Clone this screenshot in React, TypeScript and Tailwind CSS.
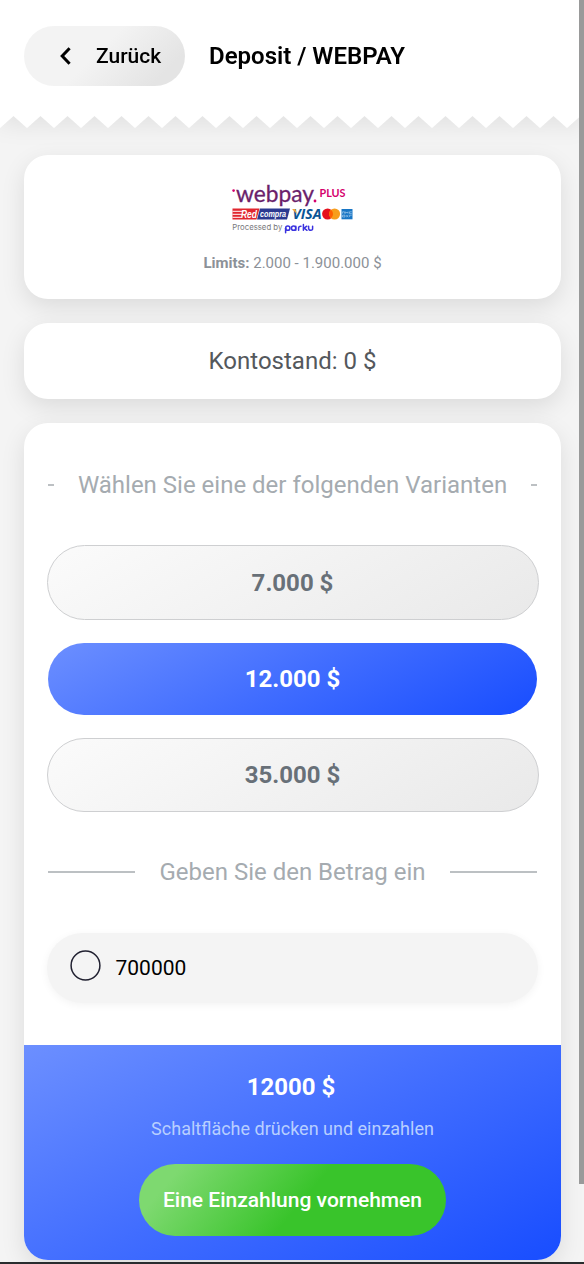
import React from "react";

function ZigZag() {
  const teeth = Array.from({ length: 22 }, (_, i) => `L${i * 27 + 13.5} 0 L${i * 27 + 27} 12`).join(" ");
  return (
    <svg className="block h-[13px] w-full" width="584" height="13" viewBox="0 0 584 13" preserveAspectRatio="xMinYMin slice" aria-hidden="true">
      <path d={`M0 0 L0 12 ${teeth} L594 0 Z`} fill="#fff" />
    </svg>
  );
}

function WebpayLogo() {
  return (
    <svg className="block overflow-visible" width="122" height="50" viewBox="0 0 122 50" role="img">
      <circle cx="1.6" cy="6.6" r="1.3" fill="#d5006c" />
      <text x="4" y="17.8" fontFamily="Lato, sans-serif" fontSize="23" fontWeight="400" fill="#6b1f6b" stroke="#6b1f6b" strokeWidth="0.3" textLength="78" lengthAdjust="spacingAndGlyphs">webpay</text>
      <circle cx="83" cy="17" r="1.4" fill="#d5006c" />
      <text x="87.5" y="13.4" fontFamily="Lato, sans-serif" fontSize="11" fontWeight="700" fill="#d5006c" textLength="26" lengthAdjust="spacingAndGlyphs">PLUS</text>

      <path d="M0.5 24.5H27.5L24.5 35.5H0.5Z" fill="#e1262f" />
      <path d="M28 24.5H58L55 35.5H25Z" fill="#2b3990" />
      <path d="M0.5 27.3H11.5M0.5 30.3H10.5M0.5 33.3H9.5" stroke="#fff" strokeWidth="1" />
      <text x="9" y="34" fontFamily="Liberation Sans, sans-serif" fontSize="10.5" fontStyle="italic" fontWeight="700" fill="#fff" textLength="16" lengthAdjust="spacingAndGlyphs">Red</text>
      <text x="28" y="33" fontFamily="Liberation Sans, sans-serif" fontSize="9.5" fontStyle="italic" fontWeight="700" fill="#fff" textLength="26" lengthAdjust="spacingAndGlyphs">compra</text>
      <text x="60.5" y="35" fontFamily="Open Sans, sans-serif" fontSize="14" fontStyle="italic" fontWeight="700" fill="#0a5596" textLength="29" lengthAdjust="spacingAndGlyphs">VISA</text>
      <path d="M60 25H63.4L65 30Z" fill="#f2a63b" />
      <circle cx="95.6" cy="30" r="5.5" fill="#e5101d" />
      <circle cx="102.6" cy="30" r="5.5" fill="#f79e1b" />
      <path d="M99.1 25.8A5.5 5.5 0 0 1 99.1 34.2A5.5 5.5 0 0 1 99.1 25.8Z" fill="#ff5f00" />
      <rect x="109.5" y="25" width="11" height="10.3" fill="#1976c5" />
      <path d="M110.5 29.6V27.8H112.4V29.6M113.6 29.6V27.8L114.8 29L116 27.8V29.6M119.8 27.8H117.5V29.6H119.8M110.5 31.2H113V33H110.5ZM114.2 31.2L116.4 33M116.4 31.2L114.2 33M117.6 33V31.2H119.8" fill="none" stroke="#b9d8f2" strokeWidth="0.6" />

      <text x="0.3" y="46.3" fontFamily="Inter, sans-serif" fontSize="8" fill="#77777b" textLength="50" lengthAdjust="spacingAndGlyphs">Processed by</text>
      <g fill="none" stroke="#3a32df" strokeWidth="1.5" strokeLinecap="round" strokeLinejoin="round">
        <path d="M53.6 48.8V44.2" />
        <circle cx="55.8" cy="44.2" r="2.1" />
        <circle cx="61.6" cy="44.2" r="2.1" />
        <path d="M63.8 42.2V46.3M66.6 46.3V43.6Q66.8 42.2 69 42.3M71.4 40.4V46.3M74.8 42.2L72.2 44.2L75 46.3M76.6 42.3V44.4Q76.8 46.3 78.8 46.3T80.6 44.4V42.3" />
      </g>
    </svg>
  );
}

function Option({ label, selected = false }: { label: string; selected?: boolean }) {
  return selected ? (
    <button className="mx-px h-[72px] rounded-full bg-[linear-gradient(153deg,#6c8fff_0%,#416dff_50%,#184dff_100%)] text-2xl font-bold text-white">
      {label}
    </button>
  ) : (
    <button className="-mx-[0.5px] h-[74.5px] rounded-full border border-[#cecfd1] bg-[linear-gradient(150deg,#fbfbfb,#e9e9e9)] pt-[0.5px] text-2xl font-bold text-[#687078]">
      {label}
    </button>
  );
}

const card = "rounded-[24px] bg-white shadow-[0_8px_24px_rgba(0,0,0,0.1)]";

export default function App() {
  return (
    <div className="relative flex h-[1264px] w-[584px] flex-col overflow-hidden bg-[#f4f4f4] font-[Roboto,sans-serif] text-black">
      <header className="shrink-0 drop-shadow-[0_4px_10px_rgba(0,0,0,0.07)]">
        <div className="flex h-[116px] items-start bg-white pt-[26px] pl-6">
          <button className="flex h-[60px] w-[161px] items-center rounded-full bg-[linear-gradient(135deg,#f3f3f3_45%,#e4e4e4_85%)] pl-9 text-[21px] font-medium">
            <svg className="-ml-px" width="12" height="18" viewBox="0 0 12 18" fill="none" stroke="#000" strokeWidth="3" aria-hidden="true">
              <path d="M10.6 1.3L3.2 9L10.6 16.7" />
            </svg>
            <span className="mt-px ml-[25px]">Zurück</span>
          </button>
          <h1 className="ml-6 text-2xl leading-[60px] font-semibold whitespace-nowrap">Deposit / WEBPAY</h1>
        </div>
        <ZigZag />
      </header>

      <main className="flex flex-col gap-6 pt-[26px] pr-[23px] pl-6">
        <section className={`${card} flex h-[144px] flex-col items-center pt-[29px]`}>
          <WebpayLogo />
          <p className="mt-[19px] text-[15px] leading-5 text-[#8c9198]"><b>Limits:</b> 2.000 - 1.900.000 $</p>
        </section>

        <section className={`${card} flex h-[75.5px] items-center justify-center text-2xl text-[#54585c]`}>Kontostand: 0 $</section>

        <section className={`${card} flex h-[837.5px] flex-col overflow-hidden`}>
          <div className="flex flex-col px-[23px] pt-[46.5px]">
            <div className="mx-px flex h-8 items-center gap-6 text-2xl whitespace-nowrap text-[#a5abb0]">
              <span className="h-0.5 flex-1 bg-[#bcc0c3]" />
              Wählen Sie eine der folgenden Varianten
              <span className="h-0.5 flex-1 bg-[#bcc0c3]" />
            </div>
            <div className="mt-11 flex flex-col gap-[23px]">
              <Option label="7.000 $" />
              <Option label="12.000 $" selected />
              <Option label="35.000 $" />
            </div>
            <div className="mx-px mt-11 flex h-8 items-center gap-6 text-2xl whitespace-nowrap text-[#a5abb0]">
              <span className="h-0.5 flex-1 bg-[#bcc0c3]" />
              Geben Sie den Betrag ein
              <span className="h-0.5 flex-1 bg-[#bcc0c3]" />
            </div>
            <label className="mt-[45px] flex h-[70px] items-center rounded-full bg-[#f4f4f4] pl-[23px] text-[21px] shadow-[0_2px_8px_rgba(0,0,0,0.05)]">
              <svg className="-mt-1.5" width="31" height="31" viewBox="0 0 31 31" fill="none" stroke="#202030" strokeWidth="1.5" aria-hidden="true">
                <circle cx="15.5" cy="15.5" r="14.4" />
              </svg>
              <span className="mt-px ml-[14.5px]">700000</span>
            </label>
          </div>
          <footer className="mt-auto flex h-[215.5px] shrink-0 flex-col items-center bg-[linear-gradient(153deg,#6c8fff_0%,#416dff_50%,#184dff_100%)] pt-[26.5px]">
            <strong className="-ml-[3px] text-2xl leading-8 font-bold text-white">12000 $</strong>
            <p className="mt-[14px] text-lg leading-6 text-[#b8cfff]">Schaltfläche drücken und einzahlen</p>
            <button className="mt-[22.9px] h-[72px] w-[307px] rounded-full bg-[linear-gradient(130deg,#7ed970_12%,#39c42b_53%)] pt-0.5 text-[21px] font-medium text-white">
              Eine Einzahlung vornehmen
            </button>
          </footer>
        </section>
      </main>

      <div className="absolute top-0 right-0 h-[1184px] w-[5px] bg-[#999a9a]" />
      <div className="absolute bottom-0 left-0 h-0.5 w-full bg-[#292c2e]" />
    </div>
  );
}
